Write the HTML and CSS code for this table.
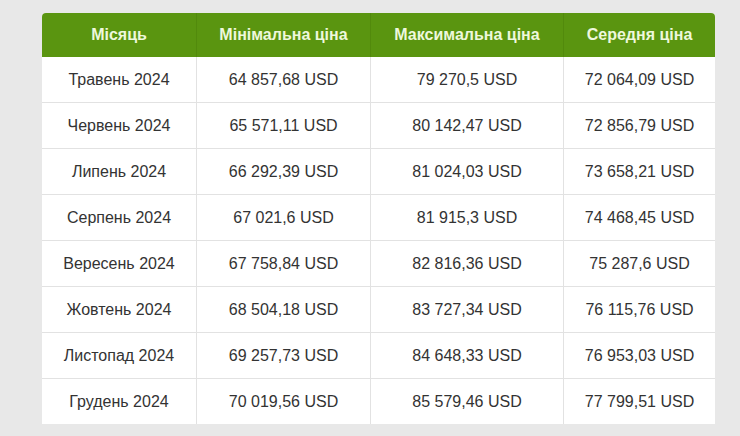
FILE: index.html
```html
<!DOCTYPE html>
<html lang="uk">
<head>
<meta charset="utf-8">
<link rel="stylesheet" href="styles.css">
</head>
<body>
<div class="wrap">
<table class="prices">
<colgroup><col class="c1"><col class="c2"><col class="c3"><col class="c4"></colgroup>
<thead>
<tr><th>Місяць</th><th>Мінімальна ціна</th><th>Максимальна ціна</th><th>Середня ціна</th></tr>
</thead>
<tbody>
<tr><td>Травень 2024</td><td>64 857,68 USD</td><td>79 270,5 USD</td><td>72 064,09 USD</td></tr>
<tr><td>Червень 2024</td><td>65 571,11 USD</td><td>80 142,47 USD</td><td>72 856,79 USD</td></tr>
<tr><td>Липень 2024</td><td>66 292,39 USD</td><td>81 024,03 USD</td><td>73 658,21 USD</td></tr>
<tr><td>Серпень 2024</td><td>67 021,6 USD</td><td>81 915,3 USD</td><td>74 468,45 USD</td></tr>
<tr><td>Вересень 2024</td><td>67 758,84 USD</td><td>82 816,36 USD</td><td>75 287,6 USD</td></tr>
<tr><td>Жовтень 2024</td><td>68 504,18 USD</td><td>83 727,34 USD</td><td>76 115,76 USD</td></tr>
<tr><td>Листопад 2024</td><td>69 257,73 USD</td><td>84 648,33 USD</td><td>76 953,03 USD</td></tr>
<tr><td>Грудень 2024</td><td>70 019,56 USD</td><td>85 579,46 USD</td><td>77 799,51 USD</td></tr>
</tbody>
</table>
</div>
</body>
</html>
```
FILE: styles.css
```css
html, body {
  margin: 0;
  padding: 0;
  background: #e8e8e8;
}
body {
  font-family: "Liberation Sans", Arial, sans-serif;
  width: 740px;
  height: 436px;
  overflow: hidden;
}
.wrap {
  padding: 13px 0 0 42px;
}
.prices {
  width: 673px;
  border-collapse: separate;
  border-spacing: 0;
  table-layout: fixed;
  background: #fff;
  border-radius: 4px 4px 0 0;
}
.c1 { width: 154px; }
.c2 { width: 174px; }
.c3 { width: 193px; }
.c4 { width: 152px; }
.prices th {
  background: #5a9510;
  color: #eef8dc;
  font-weight: bold;
  font-size: 16px;
  height: 44px;
  padding: 0;
  text-align: center;
  border-left: 1px solid #528a0c;
}
.prices th:first-child {
  border-left: none;
  border-top-left-radius: 4px;
}
.prices th:last-child {
  border-top-right-radius: 4px;
}
.prices td {
  font-size: 16px;
  color: #333;
  text-align: center;
  height: 45px;
  padding: 0;
  border-left: 1px solid #e2e2e2;
  border-top: 1px solid #e2e2e2;
}
.prices tbody tr:first-child td {
  border-top: none;
}
.prices td:first-child {
  border-left: none;
}
```
